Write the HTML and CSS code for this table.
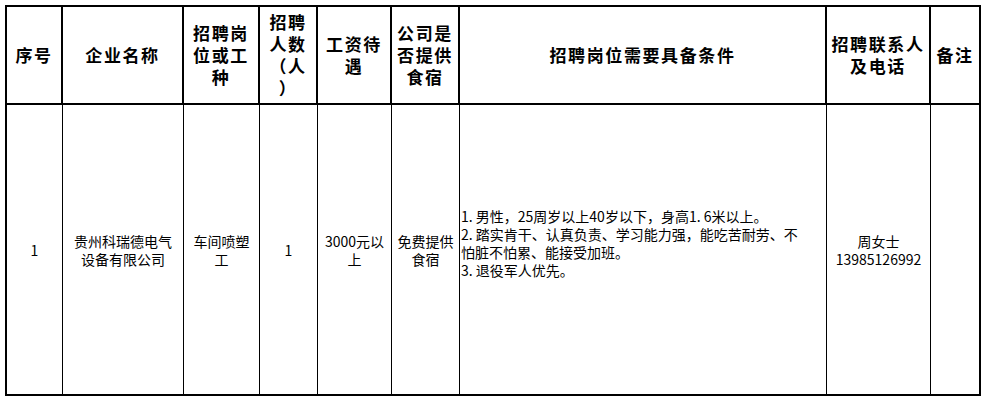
FILE: index.html
```html
<!DOCTYPE html>
<html lang="zh-CN">
<head>
<meta charset="utf-8">
<title>招聘信息</title>
<link rel="stylesheet" href="styles.css">
</head>
<body>
<div class="sheet">
  <div class="hd">序号</div>
  <div class="hd">企业名称</div>
  <div class="hd">招聘岗位或工种</div>
  <div class="hd">招聘<br>人数<br>（人<br>）</div>
  <div class="hd">工资待遇</div>
  <div class="hd">公司是否提供食宿</div>
  <div class="hd">招聘岗位需要具备条件</div>
  <div class="hd">招聘联系人及电话</div>
  <div class="hd last">备注</div>

  <div class="cell">1</div>
  <div class="cell">贵州科瑞德电气<br>设备有限公司</div>
  <div class="cell">车间喷塑<br>工</div>
  <div class="cell">1</div>
  <div class="cell">3000元以<br>上</div>
  <div class="cell">免费提供<br>食宿</div>
  <div class="cell req">1. 男性，25周岁以上40岁以下，身高1. 6米以上。<br>2. 踏实肯干、认真负责、学习能力强，能吃苦耐劳、不<br>怕脏不怕累、能接受加班。<br>3. 退役军人优先。</div>
  <div class="cell">周女士<br>13985126992</div>
  <div class="cell last"></div>
</div>
</body>
</html>
```

FILE: styles.css
```css
html, body {
  margin: 0;
  padding: 0;
  background: #ffffff;
}

.sheet {
  margin: 5px 0 0 5px;
  display: grid;
  grid-template-columns: 56px 121px 76px 58px 74px 68px 367px 104px 50px;
  grid-template-rows: 98px 291px;
  width: max-content;
  border-top: 2px solid #000;
  border-left: 2px solid #000;
  font-family: "Noto Sans CJK SC", "Noto Sans", sans-serif;
  color: #000;
  text-spacing-trim: space-all;
}

.hd,
.cell {
  box-sizing: border-box;
  display: flex;
  align-items: center;
  justify-content: center;
  text-align: center;
  border-bottom: 2px solid #000;
}

.hd {
  border-right: 2px solid #000;
  font-size: 17px;
  font-weight: 700;
  letter-spacing: 1.6px;
  line-height: 22px;
  padding: 0 3px;
  line-break: anywhere;
  word-break: break-all;
}

.cell {
  border-right: 1px solid #000;
  font-size: 14px;
  line-height: 18px;
  font-weight: 400;
  padding: 0 2px;
}

.cell.last,
.hd.last {
  border-right: 2px solid #000;
}

.cell.req {
  justify-content: flex-start;
  text-align: left;
  padding: 0 0 14px 1px;
}
```
